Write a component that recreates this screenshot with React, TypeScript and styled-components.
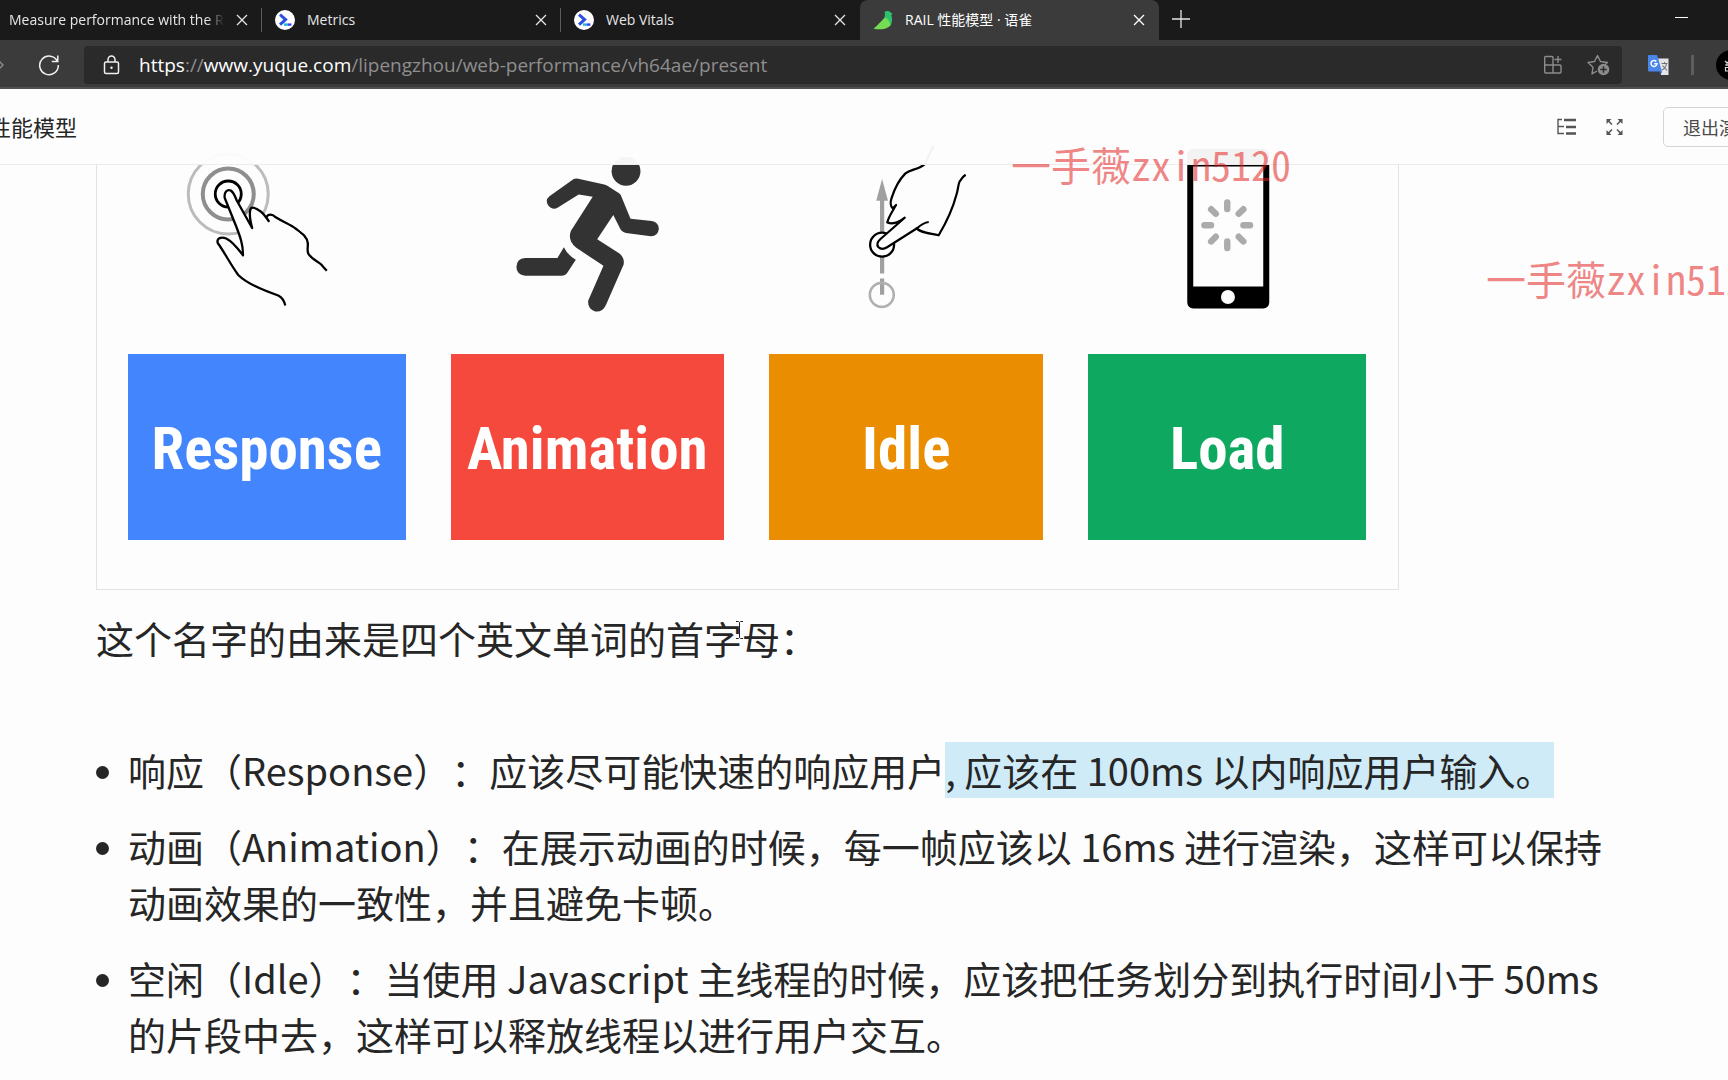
import React from 'react';
import styled, { createGlobalStyle } from 'styled-components';

const uiFont = `"Open Sans", "Noto Sans CJK SC", sans-serif`;
const docFont = `"Noto Sans CJK SC", "Noto Sans", sans-serif`;

const GlobalStyle = createGlobalStyle`
  *, *::before { box-sizing: border-box; }
  html, body, #root { height: 100%; }
  body { margin: 0; background: #fdfdfd; overflow: hidden; }
  button { font: inherit; color: inherit; background: none; border: 0; padding: 0; margin: 0; }
  h1, p, ul, figure { margin: 0; padding: 0; }
`;

const Screen = styled.div`
  position: relative;
  display: flex;
  flex-direction: column;
  height: 100%;
  overflow: hidden;
  font-family: ${docFont};
  color: #262626;
`;

/* ---------- browser chrome ---------- */

const TabStrip = styled.div`
  display: flex;
  flex: none;
  height: 40px;
  background: #1a1a1b;
  color: #e6e6e6;
  font-family: ${uiFont};
  font-size: 14px;
`;

const Tab = styled.div<{ $active?: boolean; $first?: boolean; $divided?: boolean }>`
  position: relative;
  display: flex;
  align-items: center;
  flex: 0 1 auto;
  width: ${(p) => (p.$first ? 262 : 299)}px;
  gap: 12px;
  padding: 0 14px 0 ${(p) => (p.$first ? 9 : 13)}px;
  border-radius: 8px 8px 0 0;
  background: ${(p) => (p.$active ? '#3b3b3b' : 'transparent')};
  color: ${(p) => (p.$active ? '#ffffff' : 'inherit')};

  &::after {
    content: '';
    position: absolute;
    right: 0;
    top: 8px;
    width: 1px;
    height: 24px;
    background: ${(p) => (p.$divided ? '#5c5c5c' : 'transparent')};
  }
`;

const TabTitle = styled.span<{ $fade?: boolean }>`
  flex: 1;
  min-width: 0;
  overflow: hidden;
  white-space: nowrap;
  line-height: 20px;
  mask-image: ${(p) => (p.$fade ? 'linear-gradient(90deg, #000 92%, transparent 100%)' : 'none')};
`;

const IconButton = styled.button`
  display: flex;
  flex: none;
  align-items: center;
  justify-content: center;
`;

const TabClose = styled(IconButton)`
  width: 12px;
`;

const NewTab = styled(IconButton)`
  width: 44px;
  padding-bottom: 2px;
`;

const Minimise = styled(IconButton)`
  justify-content: flex-end;
  width: 92px;
  margin-left: auto;
  padding: 0 40px 4px 0;
`;

const Toolbar = styled.div`
  display: flex;
  align-items: center;
  flex: none;
  height: 49px;
  padding-top: 2px;
  background: #3b3b3b;
  border-bottom: 2px solid #505050;
  color: #f0f0f0;
  font-family: ${uiFont};
`;

const Navigation = styled.div`
  display: flex;
  align-items: center;
  flex: 0 0 84px;
  gap: 34px;
`;

const AddressBar = styled.div`
  display: flex;
  align-items: center;
  flex: 1;
  min-width: 0;
  height: 38px;
  padding: 0 12px 0 19px;
  gap: 19px;
  border-radius: 4px;
  background: #2a2a2a;
`;

const Url = styled.div`
  flex: 1;
  min-width: 0;
  overflow: hidden;
  white-space: nowrap;
  font-size: 19px;
  line-height: 26px;
  color: #8e8e8e;
`;

const UrlStrong = styled.span`
  color: #ffffff;
`;

const AddressActions = styled.div`
  display: flex;
  gap: 25px;
  color: #8c8c8c;
`;

const Extensions = styled.div`
  display: flex;
  align-items: center;
  flex: none;
  padding-left: 26px;
  gap: 22px;
`;

const Divider = styled.span`
  width: 3px;
  height: 20px;
  background: #5e5e5e;
`;

const EdgeSlot = styled.div<{ $width: number }>`
  display: flex;
  flex: 0 0 ${(p) => p.$width}px;
  overflow: hidden;
`;

/* ---------- presented document ---------- */

const Page = styled.main`
  position: relative;
  flex: 1;
  min-height: 0;
  overflow: hidden;
`;

const PageHeader = styled.header`
  position: absolute;
  z-index: 1;
  inset: 0 0 auto 0;
  display: flex;
  align-items: center;
  height: 76px;
  background: rgba(253, 253, 253, 0.96);
  border-bottom: 1px solid #ececec;
`;

const TitleSlot = styled.div`
  display: flex;
  justify-content: flex-end;
  width: 77px;
  overflow: hidden;
`;

const Title = styled.h1`
  flex: none;
  padding-bottom: 2px;
  font-size: 22px;
  font-weight: 400;
  line-height: 32px;
`;

const HeaderTools = styled.div`
  display: flex;
  align-items: center;
  gap: 30px;
  margin-left: auto;
  padding-right: 40px;
  color: #555555;
`;

const ExitButton = styled.button`
  flex: none;
  height: 40px;
  padding: 0 19px;
  border: 1px solid #d4d4d4;
  border-radius: 5px;
  font-size: 18px;
  line-height: 26px;
  color: #4a4a4a;
`;

const Article = styled.article`
  position: relative;
  padding: 0 112px 0 96px;
  font-size: 38px;
  line-height: 56px;
  text-spacing-trim: space-all;
`;

const Figure = styled.figure`
  display: grid;
  grid-template-columns: 277fr 273fr 274fr 277fr;
  column-gap: 45px;
  max-width: 1303px;
  padding: 0 32px 49px 31px;
  border: 1px solid #e2e2e2;
  border-top: 0;
`;

const Drawing = styled.svg`
  display: block;
  width: 100%;
  height: 265px;
`;

const Pillar = styled.div<{ $color: string }>`
  display: flex;
  align-items: center;
  justify-content: center;
  height: 186px;
  padding-top: 4px;
  background: ${(p) => p.$color};
  color: #ffffff;
  font-family: "Roboto Condensed", Roboto, sans-serif;
  font-size: 59px;
  font-weight: 700;
  line-height: 64px;
`;

const Intro = styled.p`
  position: relative;
  padding: 20px 0 76px;
`;

const Caret = styled.svg`
  position: absolute;
  left: 639px;
  top: 31px;
`;

const List = styled.ul`
  display: flex;
  flex-direction: column;
  gap: 20px;
  list-style: none;
`;

const Item = styled.li`
  display: grid;
  grid-template-columns: 13px 1fr;
  column-gap: 19px;

  &::before {
    content: '';
    width: 13px;
    height: 13px;
    margin-top: 24px;
    border-radius: 50%;
    background: #262626;
  }
`;

const Marked = styled.mark`
  display: inline-block;
  background: #d0ebf8;
  color: inherit;
`;

const Watermark = styled.div<{ $x: number; $y: number }>`
  position: absolute;
  z-index: 2;
  left: ${(p) => p.$x}px;
  top: ${(p) => p.$y}px;
  white-space: nowrap;
  font-family: "Noto Sans Mono CJK SC", "Noto Sans CJK SC", monospace;
  font-size: 40px;
  line-height: 48px;
  color: rgba(228, 30, 30, 0.55);
  pointer-events: none;
`;

/* ---------- icons ---------- */

const CloseIcon = () => (
  <svg width="12" height="12" viewBox="0 0 12 12" fill="none" stroke="currentColor" strokeWidth="1.3">
    <path d="M1 1l10 10M11 1L1 11" />
  </svg>
);

const WebDevIcon = () => (
  <svg width="20" height="20" viewBox="0 0 20 20">
    <circle cx="10" cy="10" r="10" fill="#fff" />
    <path d="M5 4.6l5.6 4.9L5 14.6" fill="none" stroke="#2a50e0" strokeWidth="3" />
    <path d="M9 14.6h4" stroke="#18b6d8" strokeWidth="2.4" />
    <path d="M13 14.6h3.4" stroke="#3740ff" strokeWidth="2.4" />
  </svg>
);

const YuqueIcon = () => (
  <svg width="20" height="20" viewBox="0 0 20 20">
    <path d="M11.500 1.800c2-1.200 5-.9 6 .8l2 .8-1.200 1.600c1.200 3.600 1.200 7.400-.8 10.500L9.500 10c2.500-2.300 3-5 2-8.200z" fill="#2fc070" />
    <path d="M.5 18.800C5 15 8 11 12.300 7.500c3.200 1.800 5 5 5.200 8-4 4.200-10.500 4.400-17 3.300z" fill="#74dc54" />
  </svg>
);

const TouchDrawing = () => (
  <Drawing viewBox="0 1 275 265" aria-hidden="true">
    <g fill="none">
      <circle cx="99" cy="106" r="40" stroke="#bcbcbc" strokeWidth="3" />
      <circle cx="99" cy="106" r="25.500" stroke="#8e8e8e" strokeWidth="4" />
      <circle cx="99" cy="106" r="13" stroke="#000" strokeWidth="2.800" />
    </g>
    <path
      d="M156 217.500C155 213 153 209.500 149 207.500C133 202 117 195 109 187C101 176 95 164 88.500 155C87 150 92 148.500 97 150.500C104 154 109 161 113.700 167.300C114 157 111 149 107 138.500L95.500 110C94.500 104 98 101 101.500 102.500C105 105 106 109 107.500 112.500L122.900 140C121 133 120 124 121.500 120.500C123.500 118 128 121 131.500 123.500C135 126 137 130 139.400 133L137 129.500C139 125.500 143 126 146.500 129.300C154 134 161 136.500 167 141C173 145.500 178 149 178.500 155C179 159 177.500 162 179 165.500C182 171 188 173 192 176.500C194 179 196 181 197.500 182.700"
      fill="#fdfdfd" stroke="#000" strokeWidth="2.300" strokeLinejoin="round"
    />
  </Drawing>
);

const RunnerDrawing = () => (
  <Drawing viewBox="0 1 275 265" aria-hidden="true">
    <g fill="#333333">
      <circle cx="176" cy="83" r="14.500" />
      <path d="M123 91Q125 90 128 90.500L153 96Q156 96.500 158 98L169 105Q171 106.500 171.600 109L180.500 130.700L202 133Q209 134.500 209 141Q208 148.500 201 148.300L176 145Q171.500 144 169.900 140.300L163.200 127L147 151.300L169 165.500Q175 170 173.500 177L156 217Q152.500 225 145 224Q137 221.500 138 213L153.300 178L126 160Q117 153 120.500 143L142.500 108.700L128.400 106.300L107.500 119.500Q102 123 97.500 117Q94.500 111.500 99 108Z" />
      <path d="M113.500 159.300Q117 167 125.500 172L117.600 184Q115.500 188 111 188H74.500Q65.800 187 65.800 179.300Q66 171 74.500 170.300H107Z" />
    </g>
  </Drawing>
);

const SwipeDrawing = () => (
  <Drawing viewBox="0 1 275 265" aria-hidden="true">
    <path d="M113.300 110v75.500M113.300 190.500V207" stroke="#a0a0a0" strokeWidth="4.200" />
    <path d="M113.300 91l5.900 21.700h-11.800z" fill="#a0a0a0" />
    <circle cx="113" cy="207" r="12" fill="none" stroke="#b0b0b0" strokeWidth="2.600" />
    <circle cx="113.300" cy="156.700" r="12" fill="#fdfdfd" stroke="#000" strokeWidth="2.300" />
    <path d="M165 57L156 76C149 82 142 81 136.700 85.300C130 92 125 103 122.700 110.300C121.500 114 121.500 118 124 120.300L127.300 117C124.500 122 119.500 129 118.500 134.500C124 136.500 129 135.500 136 129.700L111.700 151C108.500 154 107.500 156.500 109.500 159C112 161.500 115.500 161 118.300 159.300L148.300 140.300C150.500 144 160 145 170 147.300C178 134 184 121 188 106C190 99 189.500 94 192 92C193.500 89.500 195 88 197 86.700L200 57Z" fill="#fdfdfd" />
    <g fill="none" stroke="#000" strokeWidth="2.200" strokeLinejoin="round">
      <path d="M165 57L156 76C149 82 142 81 136.700 85.300C130 92 125 103 122.700 110.300C121.500 114 121.500 118 124 120.300L127.300 117C124.500 122 119.500 129 118.500 134.500C124 136.500 129 135.500 136 129.700L111.700 151C108.500 154 107.500 156.500 109.500 159C112 161.500 115.500 161 118.300 159.300L148.300 140.300C152 137 156 134.500 160 134" />
      <path d="M147.500 139.500C150 144.500 160 145 170 147.300C178 134 184 121 188 106C190 99 189.500 94 192 92C193.500 89.500 195 88 197 86.700" />
    </g>
  </Drawing>
);

const spokes = [0, 45, 90, 135, 180, 225, 270, 315];

const PhoneDrawing = () => (
  <Drawing viewBox="0 1 275 265" aria-hidden="true">
    <rect x="98" y="61" width="82" height="159.500" rx="6" fill="#000" />
    <rect x="104" y="78.500" width="70" height="120" fill="#fdfdfd" />
    <circle cx="138.700" cy="209" r="7" fill="#fdfdfd" />
    {spokes.map((angle) => (
      <path key={angle} d="M138 114.500v6.600" transform={`rotate(${angle} 138 137.300)`} stroke="#ababab" strokeWidth="6.400" strokeLinecap="round" />
    ))}
  </Drawing>
);

const pillars = [
  { name: 'Response', color: '#4285fd' },
  { name: 'Animation', color: '#f4493c' },
  { name: 'Idle', color: '#eb8d00' },
  { name: 'Load', color: '#0fa861' },
];

export default function App() {
  return (
    <Screen>
      <GlobalStyle />
      <TabStrip>
        <Tab $first $divided>
          <TabTitle $fade>Measure performance with the R</TabTitle>
          <TabClose aria-label="Close tab"><CloseIcon /></TabClose>
        </Tab>
        <Tab $divided>
          <WebDevIcon />
          <TabTitle>Metrics</TabTitle>
          <TabClose aria-label="Close tab"><CloseIcon /></TabClose>
        </Tab>
        <Tab>
          <WebDevIcon />
          <TabTitle>Web Vitals</TabTitle>
          <TabClose aria-label="Close tab"><CloseIcon /></TabClose>
        </Tab>
        <Tab $active>
          <YuqueIcon />
          <TabTitle>RAIL 性能模型 · 语雀</TabTitle>
          <TabClose aria-label="Close tab"><CloseIcon /></TabClose>
        </Tab>
        <NewTab aria-label="New tab">
          <svg width="18" height="18" viewBox="0 0 18 18" stroke="currentColor" strokeWidth="1.300"><path d="M9 0v18M0 9h18" /></svg>
        </NewTab>
        <Minimise aria-label="Minimise">
          <svg width="13" height="2" viewBox="0 0 13 2"><path d="M0 .5h13" stroke="#fff" /></svg>
        </Minimise>
      </TabStrip>

      <Toolbar>
        <Navigation>
          <IconButton aria-label="Forward">
            <svg width="4" height="14" viewBox="0 0 4 14" fill="none" stroke="#8a8a8a" strokeWidth="1.500"><path d="M-1 3l4 4-4 4" /></svg>
          </IconButton>
          <IconButton aria-label="Refresh">
            <svg width="22" height="22" viewBox="0 0 22 22" fill="none" stroke="currentColor" strokeWidth="1.500">
              <path d="M19.500 7.600A9.300 9.300 0 1 0 20.300 11M19.800 1.500v6h-6" />
            </svg>
          </IconButton>
        </Navigation>
        <AddressBar>
          <svg width="17" height="20" viewBox="0 0 17 20" fill="none" stroke="currentColor" strokeWidth="1.500">
            <rect x="1.500" y="7" width="14" height="11.500" rx="1.500" />
            <path d="M5 7V4.500a3.500 3.500 0 0 1 7 0V7" />
            <circle cx="8.500" cy="12.700" r="1.200" fill="currentColor" stroke="none" />
          </svg>
          <Url><UrlStrong>https</UrlStrong>://<UrlStrong>www.yuque.com</UrlStrong>/lipengzhou/web-performance/vh64ae/present</Url>
          <AddressActions>
            <IconButton aria-label="Apps">
              <svg width="18" height="20" viewBox="0 0 18 20" fill="none" stroke="currentColor" strokeWidth="1.400">
                <path d="M9 10V2.500a1 1 0 0 0-1-1H1.700a1 1 0 0 0-1 1V17a1 1 0 0 0 1 1H16a1 1 0 0 0 1-1v-6a1 1 0 0 0-1-1H.7M9 10v8M14 1v7M10.500 4.500h7" />
              </svg>
            </IconButton>
            <IconButton aria-label="Add to favourites">
              <svg width="23" height="22" viewBox="0 0 23 22">
                <path d="M10 17l-5 2.800 1-6.500L1 8.500l6.500-1L10.500 1.500l3 6 7 1-3 2.500" fill="none" stroke="currentColor" strokeWidth="1.400" strokeLinejoin="round" />
                <circle cx="16.500" cy="15.500" r="5.800" fill="currentColor" />
                <path d="M16.500 12.300v6.400M13.300 15.500h6.400" stroke="#2a2a2a" strokeWidth="1.400" />
              </svg>
            </IconButton>
          </AddressActions>
        </AddressBar>
        <Extensions>
          <IconButton aria-label="Translate">
            <svg width="21" height="20" viewBox="0 0 21 20">
              <path d="M10 3.500h10.500V20H13z" fill="#e4e4e4" />
              <path d="M0 1a1 1 0 0 1 1-1h8l5 16.500H1a1 1 0 0 1-1-1z" fill="#4a86ea" />
              <path d="M8.300 6.500A3 3 0 1 0 9 8.700H6.300" fill="none" stroke="#fff" strokeWidth="1.400" />
              <path d="M11 16.500h3L12.500 20z" fill="#2f5bc4" />
              <path d="M13.500 8.500h6M16.500 7v1.500M18.500 8.500c-.5 3-2.500 5.500-4.500 6.500M14.500 10.500l4.500 5" fill="none" stroke="#6a7480" strokeWidth="1.100" />
            </svg>
          </IconButton>
          <Divider />
          <EdgeSlot $width={12}>
            <IconButton aria-label="Profile">
              <svg width="30" height="30" viewBox="0 0 30 30">
                <circle cx="15" cy="15" r="15" fill="#000" />
                <path d="M9 11l2 2 2-2M9 15h5M11 13v3M9.500 17.500h4v3.500h-4z" fill="none" stroke="#ddd" strokeWidth="1.200" />
              </svg>
            </IconButton>
          </EdgeSlot>
        </Extensions>
      </Toolbar>

      <Page>
        <PageHeader>
          <TitleSlot><Title>性能模型</Title></TitleSlot>
          <HeaderTools>
            <IconButton aria-label="Outline">
              <svg width="19" height="18" viewBox="0 0 19 18" fill="none" stroke="currentColor">
                <path d="M5 1.500H1V15.500H7M1 8.500h6" strokeWidth="1.400" />
                <path d="M7 2h12M9 9h10M9 15.500h10" strokeWidth="2.400" />
              </svg>
            </IconButton>
            <IconButton aria-label="Full screen">
              <svg width="17" height="18" viewBox="0 0 17 18" fill="none" stroke="currentColor" strokeWidth="1.600">
                <path d="M1.500 2l4.500 4.500M15.500 2L11 6.500M1.500 16L6 11.500M15.500 16L11 11.500" />
                <path d="M.5 1h5l-5 5zM16.500 1h-5l5 5zM.5 17h5l-5-5zM16.500 17h-5l5-5z" fill="currentColor" stroke="none" />
              </svg>
            </IconButton>
          </HeaderTools>
          <EdgeSlot $width={65}><ExitButton>退出演示</ExitButton></EdgeSlot>
        </PageHeader>

        <Article>
          <Figure>
            <TouchDrawing />
            <RunnerDrawing />
            <SwipeDrawing />
            <PhoneDrawing />
            {pillars.map((p) => (
              <Pillar key={p.name} $color={p.color}>{p.name}</Pillar>
            ))}
          </Figure>
          <Intro>
            这个名字的由来是四个英文单词的首字母：
            <Caret width="9" height="18" viewBox="0 0 9 18" fill="none" stroke="#222">
              <path d="M1 .5h2.500l1 1 1-1H8M4.500 1.500v15M1 17.500h2.500l1-1 1 1H8" />
            </Caret>
          </Intro>
          <List>
            <Item>
              <span>响应（Response）：应该尽可能快速的响应用户<Marked>, 应该在 100ms 以内响应用户输入。</Marked></span>
            </Item>
            <Item>
              <span>动画（Animation）：在展示动画的时候，每一帧应该以 16ms 进行渲染，这样可以保持动画效果的一致性，并且避免卡顿。</span>
            </Item>
            <Item>
              <span>空闲（Idle）：当使用 Javascript 主线程的时候，应该把任务划分到执行时间小于 50ms 的片段中去，这样可以释放线程以进行用户交互。</span>
            </Item>
          </List>
        </Article>
        <Watermark $x={1011} $y={51}>一手薇zxin5120</Watermark>
        <Watermark $x={1486} $y={165}>一手薇zxin5120</Watermark>
      </Page>
    </Screen>
  );
}
